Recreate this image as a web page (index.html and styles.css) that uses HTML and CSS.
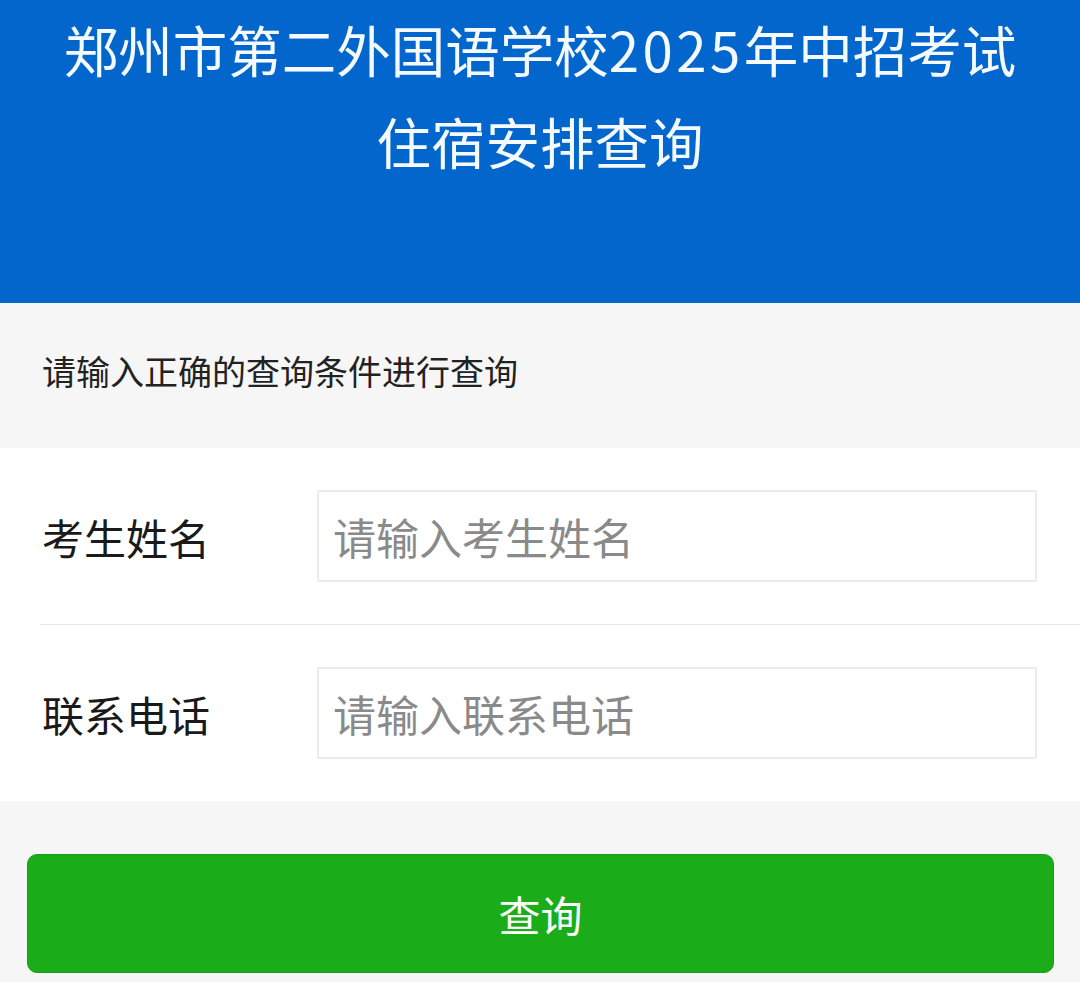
FILE: index.html
```html
<!DOCTYPE html>
<html lang="zh-CN">
<head>
<meta charset="utf-8">
<title>住宿安排查询</title>
<link rel="stylesheet" href="styles.css">
</head>
<body>
<header class="banner">
  <h1 class="banner-title">郑州市第二外国语学校<span class="num">2025</span>年中招考试<br>住宿安排查询</h1>
</header>
<p class="hint">请输入正确的查询条件进行查询</p>
<form class="form">
  <div class="row row-first">
    <label class="label" for="name">考生姓名</label>
    <input class="field" id="name" type="text" placeholder="请输入考生姓名">
  </div>
  <div class="row">
    <label class="label" for="phone">联系电话</label>
    <input class="field" id="phone" type="text" placeholder="请输入联系电话">
  </div>
</form>
<div class="actions">
  <button class="btn" type="button">查询</button>
</div>
</body>
</html>
```
FILE: styles.css
```css
* { box-sizing: border-box; }
html, body {
  margin: 0;
  padding: 0;
  background: #f6f6f6;
  font-family: "Noto Sans CJK SC", "Noto Sans", sans-serif;
}
.banner {
  height: 303px;
  background: #0266cc;
  padding-top: 3px;
}
.banner-title {
  margin: 0;
  color: #f4faff;
  font-size: 54.5px;
  font-weight: 400;
  line-height: 92px;
  text-align: center;
}
.num {
  letter-spacing: 3.5px;
}
.hint {
  margin: 0;
  padding: 45px 42px 55px;
  font-size: 34px;
  line-height: 45px;
  color: #222;
}
.form {
  background: #fff;
}
.row {
  display: flex;
  align-items: center;
  margin-left: 40px;
  padding: 42px 43px 42px 0;
}
.row-first {
  border-bottom: 1px solid #e6e6e6;
}
.label {
  width: 277px;
  flex: none;
  padding-left: 2px;
  font-size: 42px;
  color: #1a1a1a;
}
.field {
  flex: 1;
  height: 92px;
  border: 2px solid #ebebeb;
  border-radius: 2px;
  padding: 0 14px;
  font-family: "Noto Sans CJK SC", "Noto Sans", sans-serif;
  font-size: 43px;
  color: #222;
  background: #fff;
  outline: none;
}
.field::placeholder {
  color: #8a8a8a;
}
.actions {
  padding: 53px 26px 0 27px;
}
.btn {
  display: block;
  width: 100%;
  height: 119px;
  border: 1px solid #189f17;
  border-radius: 10px;
  background: #1aad19;
  color: #fff;
  font-family: "Noto Sans CJK SC", "Noto Sans", sans-serif;
  font-size: 42px;
  cursor: pointer;
}
```
